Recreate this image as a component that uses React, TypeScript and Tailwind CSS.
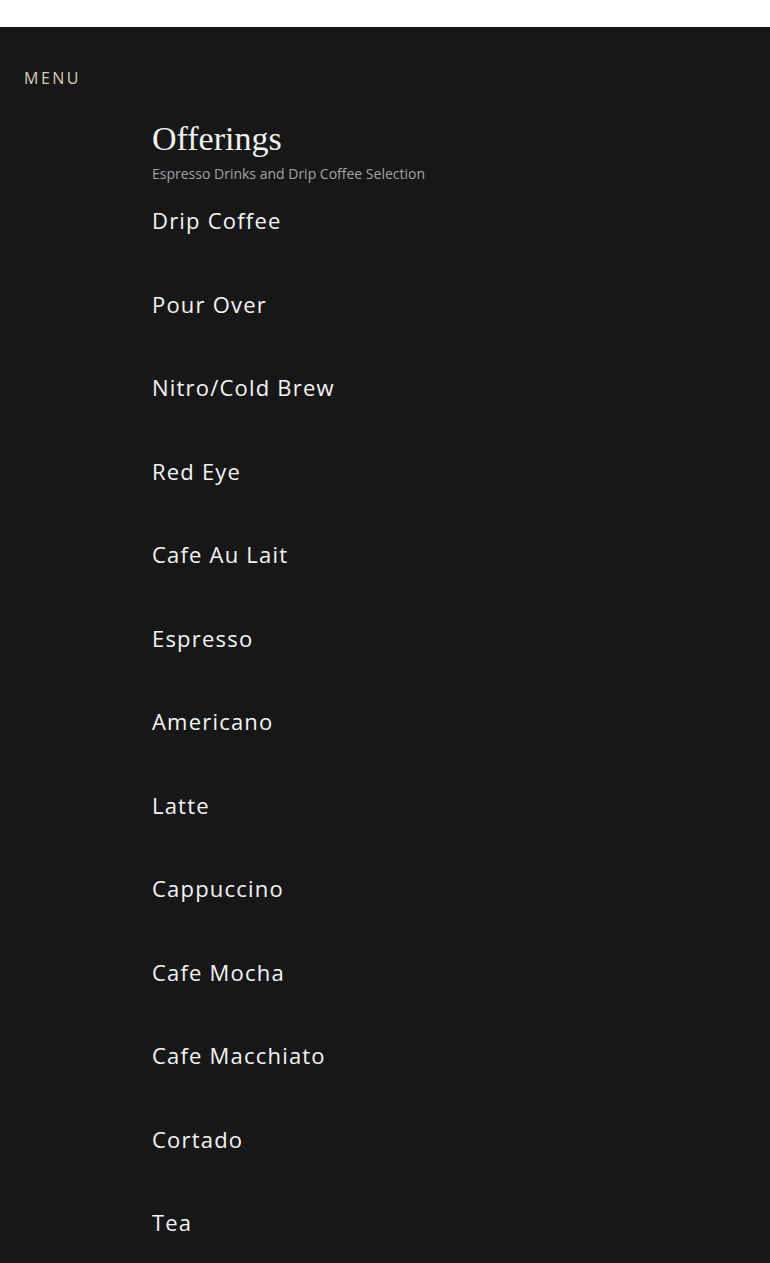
import React from 'react';

// --- Coffee menu page ---

const items = [
  'Drip Coffee',
  'Pour Over',
  'Nitro/Cold Brew',
  'Red Eye',
  'Cafe Au Lait',
  'Espresso',
  'Americano',
  'Latte',
  'Cappuccino',
  'Cafe Mocha',
  'Cafe Macchiato',
  'Cortado',
  'Tea',
];

export default function App() {
  return (
    <div className="bg-white font-['Open_Sans',sans-serif]">
      <div className="h-[27px] bg-white" />
      <div className="bg-[#171717] h-[1236px] overflow-hidden pt-[41px]">
        <div className="px-6 text-[16px] leading-[20px] tracking-[2.5px] text-[#d9ceb4]">MENU</div>
        <div className="pl-[152px] pt-[31px]">
          <h1 className="font-['Liberation_Serif',serif] text-[34px] leading-[40px] text-[#f2f2f2]">
            Offerings
          </h1>
          <p className="text-[14px] leading-[20px] text-[#a3a3a3] mt-[5px]">
            Espresso Drinks and Drip Coffee Selection
          </p>
          <ul className="mt-[20px]">
            {items.map((item) => (
              <li
                key={item}
                className="h-[83.5px] last:h-auto text-[22px] leading-[32px] tracking-[1.2px] text-[#f5f5f5]"
              >
                {item}
              </li>
            ))}
          </ul>
        </div>
      </div>
    </div>
  );
}
